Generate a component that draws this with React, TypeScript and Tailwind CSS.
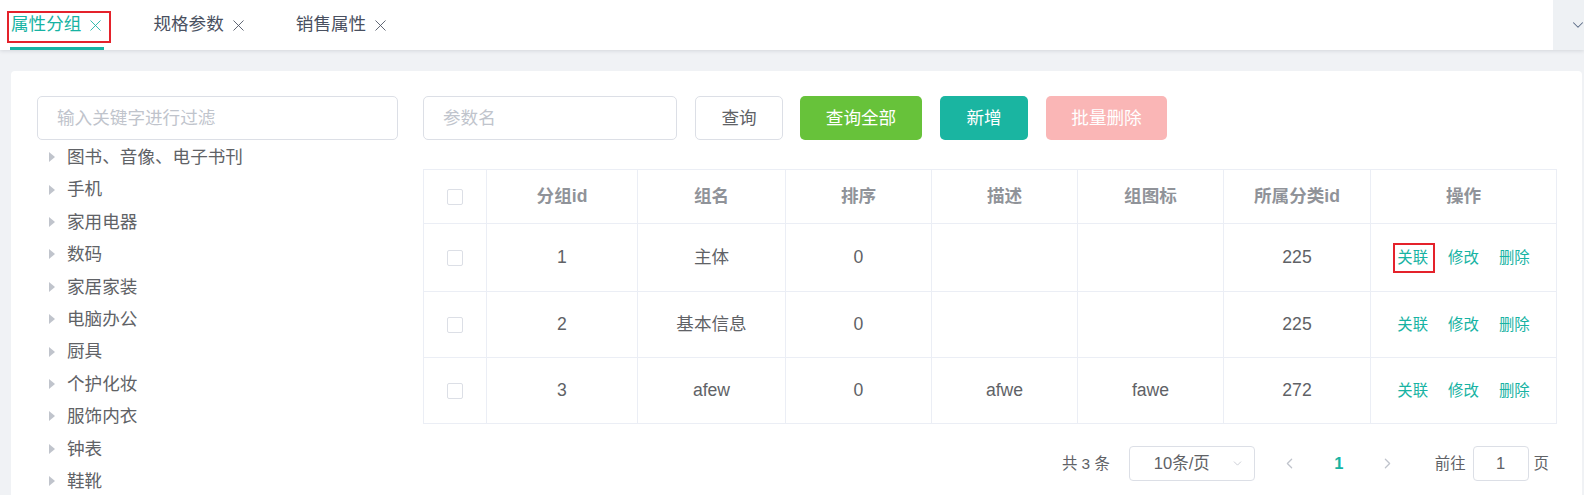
import { ChevronDown, ChevronLeft, ChevronRight, X } from 'lucide-react';

const categories = ['图书、音像、电子书刊', '手机', '家用电器', '数码', '家居家装', '电脑办公', '厨具', '个护化妆', '服饰内衣', '钟表', '鞋靴'];

const columns = [
  { label: '', width: 'w-[63px]' },
  { label: '分组id', width: 'w-[151px]' },
  { label: '组名', width: 'w-[148px]' },
  { label: '排序', width: 'w-[146px]' },
  { label: '描述', width: 'w-[146px]' },
  { label: '组图标', width: 'w-[146px]' },
  { label: '所属分类id', width: 'w-[147px]' },
  { label: '操作', width: 'flex-1' },
];

const rows = [
  { id: 1, name: '主体', sort: 0, desc: '', icon: '', catId: 225, h: 'h-[68px]' },
  { id: 2, name: '基本信息', sort: 0, desc: '', icon: '', catId: 225, h: 'h-[66px]' },
  { id: 3, name: 'afew', sort: 0, desc: 'afwe', icon: 'fawe', catId: 272, h: 'h-[66px]' },
];

function Checkbox() {
  return <span className="block h-4 w-4 rounded-[2px] border border-[#dcdfe6] bg-white" />;
}

function Cell({ width, children, last }: { width: string; children?: React.ReactNode; last?: boolean }) {
  return (
    <div className={`${width} flex shrink-0 items-center justify-center ${last ? '' : 'border-r border-[#ebeef5]'}`}>
      {children}
    </div>
  );
}

export default function App() {
  return (
    <div className="flex h-[495px] w-[1584px] flex-col overflow-hidden bg-[#f0f2f5] font-['Liberation_Sans','Noto_Sans_CJK_SC',sans-serif] text-[#606266]">
      {/* tags bar */}
      <div className="relative z-10 flex h-[50px] shrink-0 items-stretch bg-white shadow-[0_1px_4px_rgba(0,21,41,0.12)]">
        <div className="flex flex-1 items-stretch gap-[48px] pl-[11px]">
          <div className="relative flex items-center gap-[5px] text-[17.6px] leading-none text-[#17b3a3]">
            <span>属性分组</span>
            <X className="h-[19px] w-[19px]" strokeWidth={1.1} />
            <span className="absolute left-[-4px] top-[11px] h-[32px] w-[104px] border-2 border-[#e4222b]" />
            <span className="absolute bottom-0 left-[-1px] h-[3px] w-[94px] bg-[#17b3a3]" />
          </div>
          <div className="flex items-center gap-[5px] text-[17.6px] leading-none text-[#495060]">
            <span>规格参数</span>
            <X className="h-[19px] w-[19px]" strokeWidth={1.1} />
          </div>
          <div className="flex items-center gap-[5px] text-[17.6px] leading-none text-[#495060]">
            <span>销售属性</span>
            <X className="h-[19px] w-[19px]" strokeWidth={1.1} />
          </div>
        </div>
        <div className="flex w-[31px] items-center justify-end bg-[#eef1f4]">
          <ChevronDown className="h-[18px] w-[18px] translate-x-[3px] text-[#5a6a85]" strokeWidth={1.4} />
        </div>
      </div>

      {/* content card */}
      <div className="mx-[11px] mr-[2px] mt-[21px] flex flex-1 gap-[25px] rounded-t-[4px] bg-white pl-[26px] pr-[25px] pt-[25px]">
        {/* tree */}
        <div className="w-[361px] shrink-0">
          <div className="flex h-[44px] items-center rounded-[5px] border border-[#dcdfe6] px-[19px] text-[17.6px] text-[#c0c4cc]">
            输入关键字进行过滤
          </div>
          <ul className="mt-px">
            {categories.map((c) => (
              <li key={c} className="flex h-[32.4px] items-center text-[17.6px] text-[#606266]">
                <span className="ml-[12px] mr-[12px] h-0 w-0 border-y-[5px] border-l-[6px] border-y-transparent border-l-[#c0c4cc]" />
                {c}
              </li>
            ))}
          </ul>
        </div>

        {/* table side */}
        <div className="flex-1">
          <div className="flex h-[44px] items-stretch text-[17.6px]">
            <div className="flex w-[254px] items-center rounded-[5px] border border-[#dcdfe6] px-[19px] text-[#c0c4cc]">参数名</div>
            <button className="ml-[18px] w-[88px] rounded-[5px] border border-[#dcdfe6] bg-white text-[#606266]">查询</button>
            <button className="ml-[17px] w-[122px] rounded-[5px] bg-[#67c23a] text-white">查询全部</button>
            <button className="ml-[18px] w-[88px] rounded-[5px] bg-[#1ab5a1] text-white">新增</button>
            <button className="ml-[18px] w-[121px] rounded-[5px] bg-[#fab6b6] text-white">批量删除</button>
          </div>

          <div className="mt-[29px] flex flex-col border-x border-t border-[#ebeef5] text-[17.6px]">
            <div className="flex h-[54px] border-b border-[#ebeef5] font-bold text-[#909399]">
              {columns.map((col, i) => (
                <Cell key={i} width={col.width} last={i === columns.length - 1}>
                  {i === 0 ? <Checkbox /> : col.label}
                </Cell>
              ))}
            </div>
            {rows.map((r, ri) => (
              <div key={r.id} className={`flex ${r.h} border-b border-[#ebeef5]`}>
                <Cell width={columns[0].width}>
                  <Checkbox />
                </Cell>
                <Cell width={columns[1].width}>{r.id}</Cell>
                <Cell width={columns[2].width}>{r.name}</Cell>
                <Cell width={columns[3].width}>{r.sort}</Cell>
                <Cell width={columns[4].width}>{r.desc}</Cell>
                <Cell width={columns[5].width}>{r.icon}</Cell>
                <Cell width={columns[6].width}>{r.catId}</Cell>
                <Cell width={columns[7].width} last>
                  <div className="flex gap-[20px] text-[15.4px] text-[#17b3a3]">
                    <span className="relative">
                      关联
                      {ri === 0 && <span className="absolute -left-[4px] -top-[3px] h-[30px] w-[42px] border-2 border-[#e4222b]" />}
                    </span>
                    <span>修改</span>
                    <span>删除</span>
                  </div>
                </Cell>
              </div>
            ))}
          </div>

          {/* pagination */}
          <div className="mt-[22px] flex h-[35px] items-center justify-end pr-[8px] text-[15.4px] text-[#606266]">
            <span>共 3 条</span>
            <div className="ml-[19px] flex h-[35px] w-[126px] items-center rounded-[4px] border border-[#dcdfe6] pl-[24px] pr-[10px]">
              <span className="flex-1 text-[16.5px]">10条/页</span>
              <ChevronDown className="h-[13px] w-[13px] text-[#c0c4cc]" strokeWidth={1.5} />
            </div>
            <span className="ml-[17px] flex w-[36px] justify-center text-[#c0c4cc]">
              <ChevronLeft className="h-[17px] w-[17px]" strokeWidth={1.8} />
            </span>
            <span className="ml-[13px] flex w-[36px] justify-center text-[16.5px] font-bold text-[#17b3a3]">1</span>
            <span className="ml-[13px] flex w-[36px] justify-center text-[#c0c4cc]">
              <ChevronRight className="h-[17px] w-[17px]" strokeWidth={1.8} />
            </span>
            <span className="ml-[29px]">前往</span>
            <div className="ml-[7px] flex h-[35px] w-[56px] items-center justify-center rounded-[4px] border border-[#dcdfe6] text-[16.5px]">1</div>
            <span className="ml-[5px]">页</span>
          </div>
        </div>
      </div>
    </div>
  );
}
